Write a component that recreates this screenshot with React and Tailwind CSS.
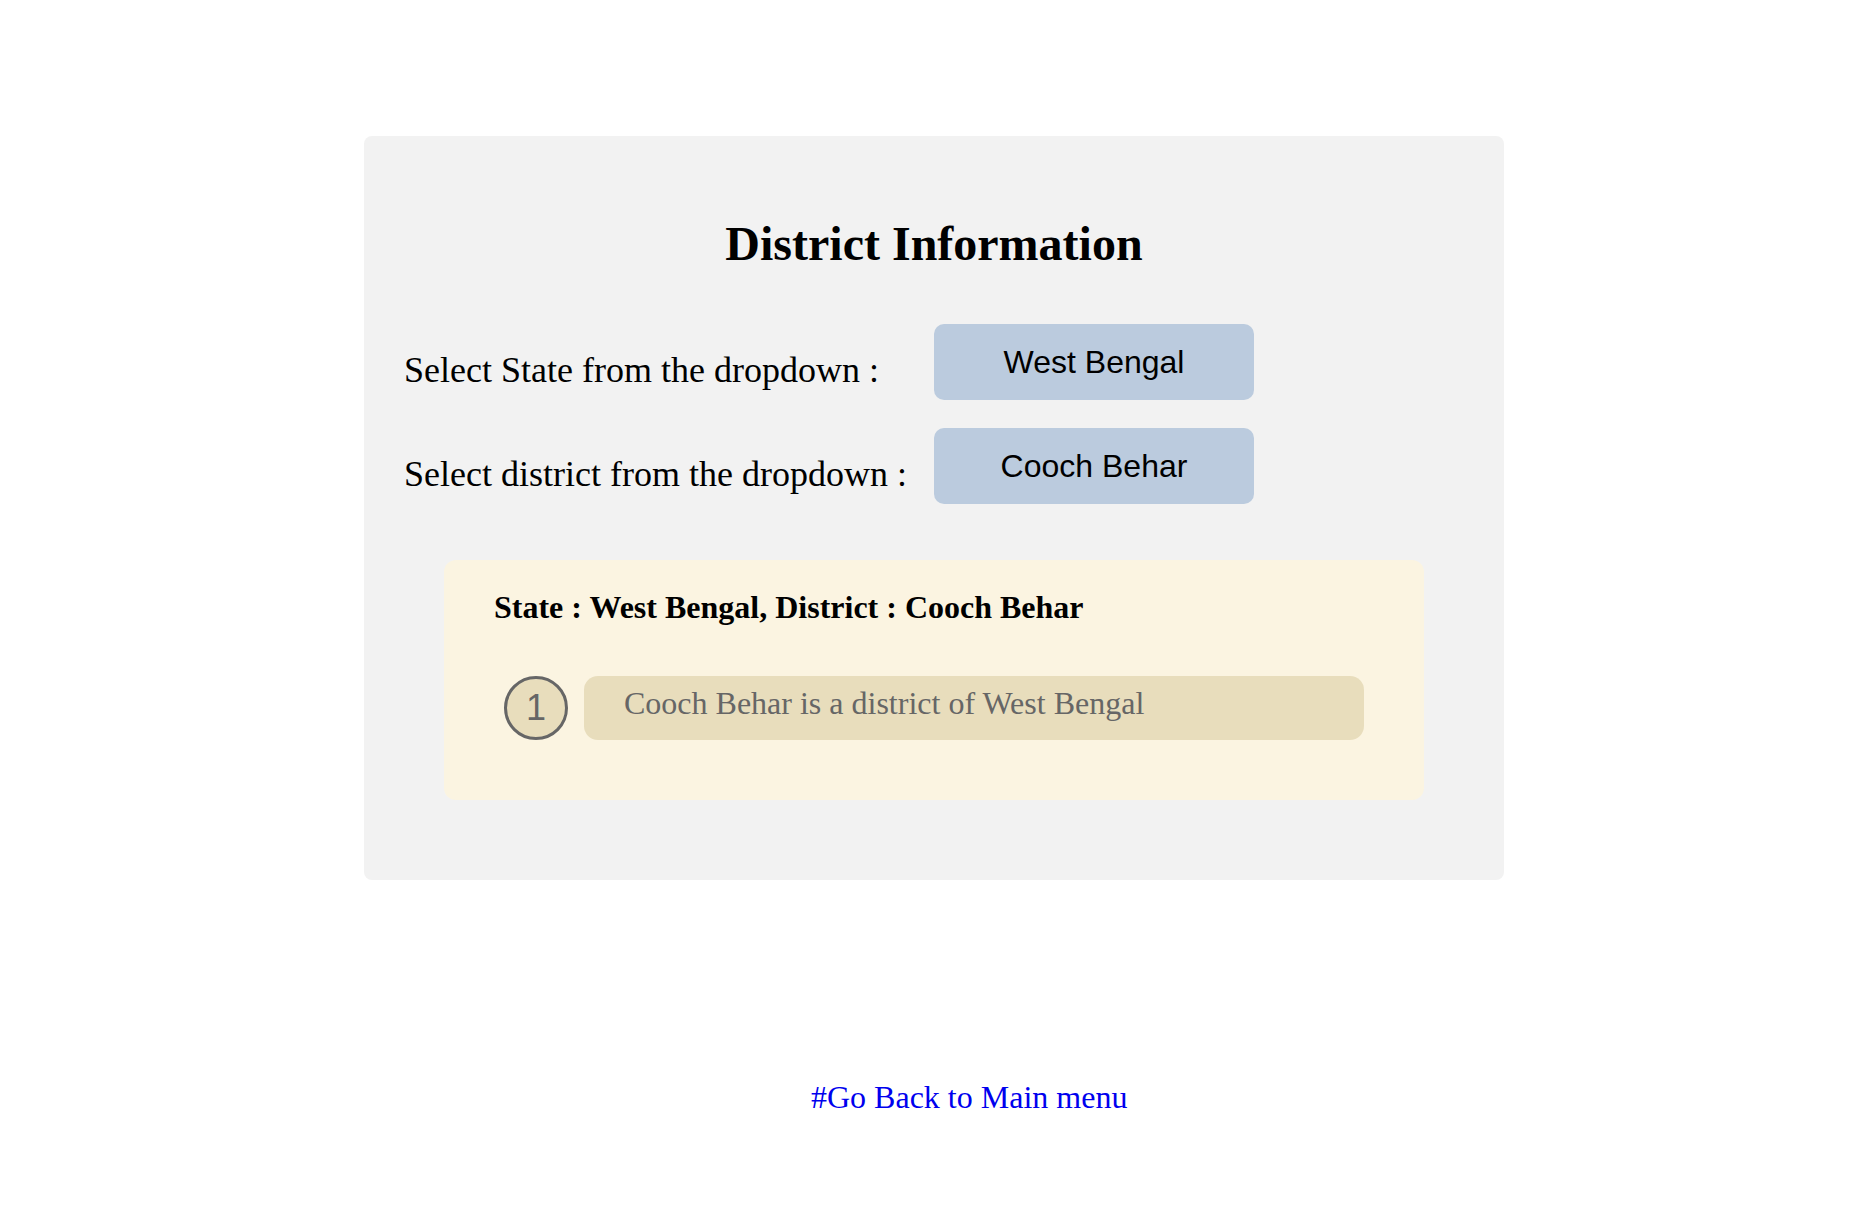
export default function App() {
  const serif = "font-['Liberation_Serif','Times_New_Roman',serif]";
  const sans = "font-['Liberation_Sans',Arial,sans-serif]";
  return (
    <div className="min-h-[1224px] bg-white pt-[136px] pb-[40px]">
      <div className="ml-[364px] w-[1140px] rounded-[8px] bg-[#f2f2f2] px-[40px] pt-[84px] pb-[80px]">
        <h1 className={`${serif} text-center text-[48px] font-bold leading-[48px] text-black`}>
          District Information
        </h1>
        <div className="mt-[56px] grid grid-cols-[530px_320px] gap-y-[28px]">
          <div className={`${serif} pt-[28px] text-[36px] leading-[36px] text-black`}>
            Select State from the dropdown :
          </div>
          <div className={`${sans} flex h-[76px] items-center justify-center rounded-[10px] bg-[#bbcbde] text-[32px] leading-none text-black`}>
            West Bengal
          </div>
          <div className={`${serif} pt-[28px] text-[36px] leading-[36px] text-black`}>
            Select district from the dropdown :
          </div>
          <div className={`${sans} flex h-[76px] items-center justify-center rounded-[10px] bg-[#bbcbde] text-[32px] leading-none text-black`}>
            Cooch Behar
          </div>
        </div>
        <div className="mx-[40px] mt-[56px] rounded-[12px] bg-[#fbf4e1] px-[50px] pt-[31px] pb-[60px]">
          <div className={`${serif} text-[32px] font-bold leading-[32px] text-black`}>
            State : West Bengal, District : Cooch Behar
          </div>
          <div className="mt-[53px] flex items-center gap-[16px] px-[10px]">
            <div className={`${sans} flex h-[64px] w-[64px] shrink-0 items-center justify-center rounded-full border-[3px] border-[#666666] bg-[#e8ddbc] text-[36px] leading-[36px] text-[#666666]`}>
              1
            </div>
            <div className={`${serif} h-[64px] flex-1 rounded-[14px] bg-[#e8ddbc] pl-[40px] pt-[11px] text-[32px] leading-[32px] text-[#666666]`}>
              Cooch Behar is a district of West Bengal
            </div>
          </div>
        </div>
      </div>
      <div className="mt-[201px] pl-[811px]">
        <a href="#" className={`${serif} text-[32px] leading-[32px] text-[#0000ee]`}>
          #Go Back to Main menu
        </a>
      </div>
    </div>
  );
}
